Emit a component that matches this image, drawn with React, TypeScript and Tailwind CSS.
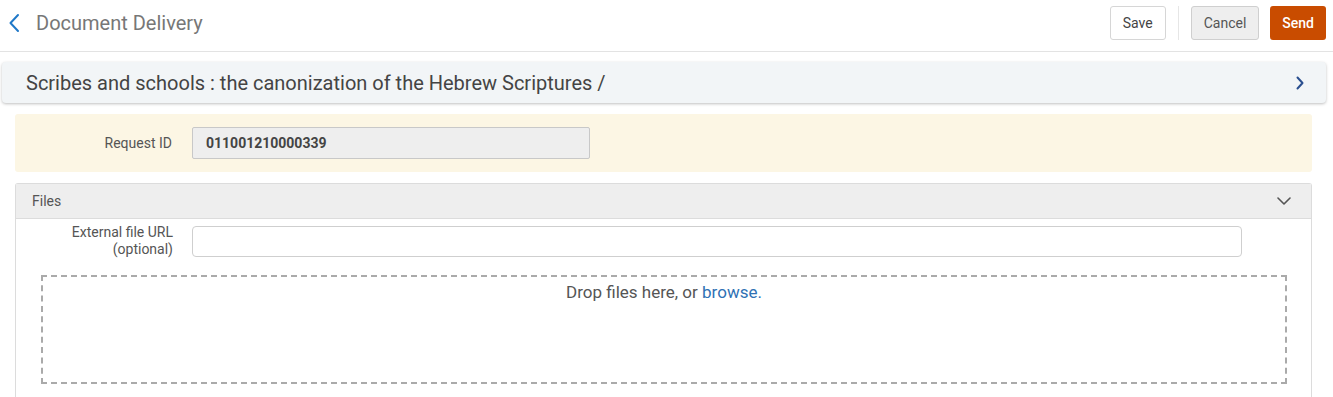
import * as React from "react";

const font = { fontFamily: "Roboto, 'Liberation Sans', sans-serif" };

function ChevronLeft() {
  return (
    <svg width="12" height="20" viewBox="0 0 12 20" fill="none">
      <path d="M10 2 L2.5 10 L10 18" stroke="#1f78c8" strokeWidth="2" strokeLinecap="round" strokeLinejoin="round" />
    </svg>
  );
}

function ChevronRight() {
  return (
    <svg width="8" height="14" viewBox="0 0 8 14" fill="none">
      <path d="M1.5 1.5 L6.5 7 L1.5 12.5" stroke="#2a4f8f" strokeWidth="2" strokeLinecap="round" strokeLinejoin="round" />
    </svg>
  );
}

function ChevronDown() {
  return (
    <svg width="14" height="8" viewBox="0 0 14 8" fill="none">
      <path d="M1 1 L7 7 L13 1" stroke="#555" strokeWidth="1.6" strokeLinecap="round" strokeLinejoin="round" />
    </svg>
  );
}

export default function App() {
  return (
    <div className="flex h-[397px] w-[1333px] flex-col overflow-hidden bg-white" style={font}>
      {/* header */}
      <header className="flex h-[52px] shrink-0 items-center justify-between border-b border-[#e3e3e3] pr-[7px] pb-[5px] pl-[8px]">
        <div className="flex items-center gap-[16px]">
          <ChevronLeft />
          <h1 className="text-[20px] leading-none text-[#777]">Document Delivery</h1>
        </div>
        <div className="flex items-center">
          <button className="h-[34px] rounded-[3px] border border-[#d6d6d6] bg-white px-[12px] text-[14px] text-[#444]">
            Save
          </button>
          <div className="mx-[12px] h-[34px] w-px bg-[#e6e6e6]" />
          <button className="h-[34px] rounded-[3px] border border-[#cfcfcf] bg-[#eeeeee] px-[12px] text-[14px] text-[#555]">
            Cancel
          </button>
          <button className="ml-[11px] h-[34px] rounded-[3px] bg-[#c94c00] px-[12px] text-[14px] font-medium text-white">
            Send
          </button>
        </div>
      </header>

      {/* title card */}
      <div className="mx-[2px] mt-[10px] mr-[7px] flex h-[41px] shrink-0 items-center justify-between rounded-[4px] bg-[#f2f5f7] pr-[22px] pl-[24px] shadow-[0_1px_3px_rgba(0,0,0,0.25)]">
        <span className="text-[20px] text-[#444]">
          Scribes and schools : the canonization of the Hebrew Scriptures /
        </span>
        <ChevronRight />
      </div>

      {/* request id */}
      <div className="mx-[15px] mt-[11px] mr-[21px] flex h-[58px] shrink-0 items-center rounded-[3px] bg-[#fcf6e4]">
        <label className="w-[157px] text-right text-[14px] text-[#555]">Request ID</label>
        <div className="ml-[20px] flex h-[32px] w-[398px] items-center rounded-[2px] border border-[#c8c8c8] bg-[#eeeeee] px-[13px] text-[14px] font-bold text-[#444]">
          011001210000339
        </div>
      </div>

      {/* files */}
      <div className="mx-[15px] mt-[11px] mr-[21px] flex flex-1 flex-col rounded-t-[3px] border border-b-0 border-[#dcdcdc]">
        <div className="flex h-[35px] shrink-0 items-center justify-between border-b border-[#dcdcdc] bg-[#eeeeee] pr-[20px] pl-[16px]">
          <span className="text-[14px] text-[#555]">Files</span>
          <ChevronDown />
        </div>
        <div className="flex flex-col">
          <div className="mt-[5px] flex items-center">
            <label className="w-[157px] text-right text-[14px] leading-[17px] text-[#555]">
              External file URL
              <br />
              (optional)
            </label>
            <input className="ml-[19px] h-[31px] w-[1050px] rounded-[4px] border border-[#cfcfcf] bg-white" />
          </div>
          <div className="mt-[17px] ml-[25px] flex h-[109px] w-[1246px] justify-center border-2 border-dashed border-[#aaaaaa] pt-[3px]">
            <span className="text-[17px] text-[#555]">
              Drop files here, or <span className="text-[#2f71b4]">browse.</span>
            </span>
          </div>
        </div>
      </div>
    </div>
  );
}
